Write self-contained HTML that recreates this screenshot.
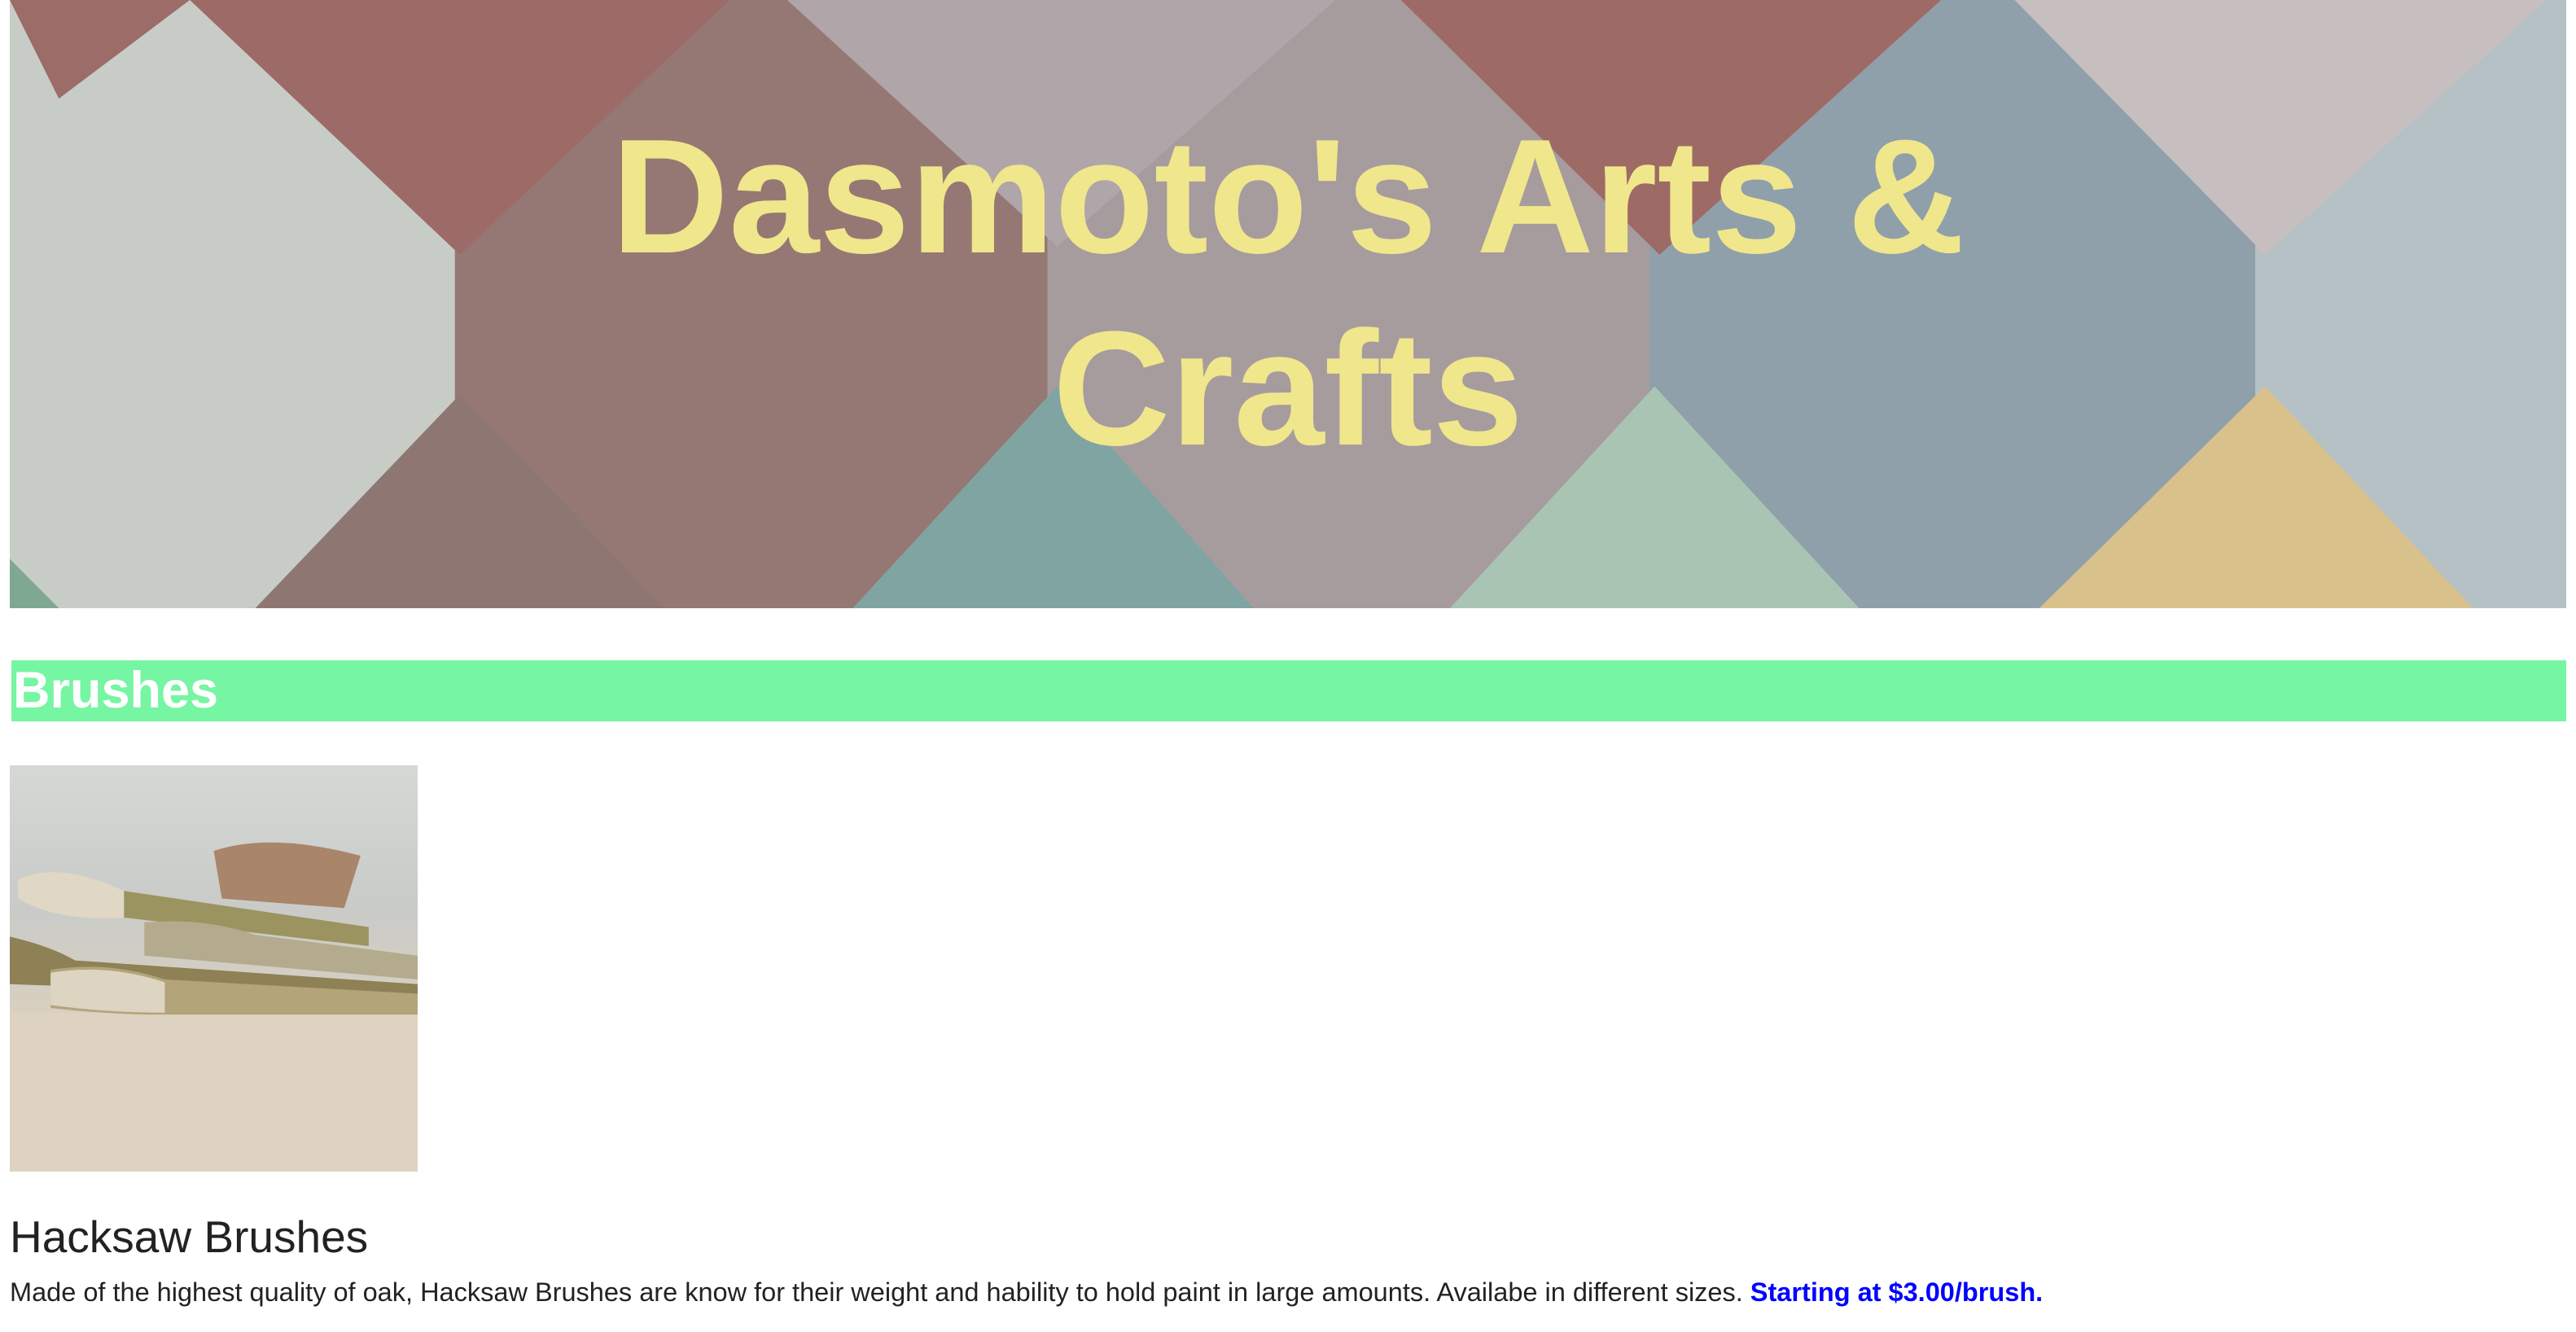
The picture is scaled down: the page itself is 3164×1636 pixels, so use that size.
<!DOCTYPE html>
<html><head><meta charset="utf-8"><style>
html,body{margin:0;padding:0;background:#fff;width:3164px;height:1636px;overflow:hidden;position:relative;font-family:"Liberation Sans",sans-serif}
#ban{position:absolute;left:12px;top:0;width:3140px;height:747px}
h1{position:absolute;left:0;top:124px;width:3164px;margin:0;text-align:center;font-size:200px;line-height:236px;color:#f0e68c;font-weight:bold}
#bar{position:absolute;left:14px;top:811px;width:3138px;height:75px;background:#76f5a2;color:#fff;font-weight:bold;font-size:63px;line-height:75px;padding-left:2px;box-sizing:border-box}
#img{position:absolute;left:12px;top:940px;width:501px;height:499px}
h2{position:absolute;left:12px;top:1487px;margin:0;font-size:55px;line-height:64px;font-weight:normal;color:#222}
p{position:absolute;left:12px;top:1568px;margin:0;font-size:32.5px;line-height:38px;color:#222;white-space:nowrap}
p b{color:#0000ff}
</style></head><body>
<svg id="ban" viewBox="0 0 1562 370" preserveAspectRatio="none">
<rect x="0" y="0" width="1562" height="370" fill="#a99d9e"/>
<rect x="0" y="0" width="272" height="370" fill="#c8ccc7"/>
<rect x="272" y="0" width="362" height="370" fill="#957873"/>
<rect x="634" y="0" width="368" height="370" fill="#a69c9e"/>
<rect x="1002" y="0" width="370" height="370" fill="#8fa0aa"/>
<rect x="1372" y="0" width="190" height="370" fill="#b5c1c5"/>
<polygon points="0,0 110,0 30,60" fill="#9c6c68"/>
<polygon points="110,0 440,0 275,155" fill="#9d6b67"/>
<polygon points="475,0 810,0 640,150" fill="#b0a6a9"/>
<polygon points="850,0 1180,0 1008,155" fill="#9e6a66"/>
<polygon points="1225,0 1550,0 1378,155" fill="#c7bfbf"/>
<polygon points="150,370 400,370 275,240" fill="#8e7772"/>
<polygon points="515,370 760,370 640,235" fill="#80a4a1"/>
<polygon points="880,370 1130,370 1005,235" fill="#a9c4b3"/>
<polygon points="1240,370 1505,370 1378,235" fill="#d9c18c"/>
<polygon points="0,340 30,370 0,370" fill="#7fa891"/>
</svg>
<h1>Dasmoto's Arts &amp;<br>Crafts</h1>
<div id="bar">Brushes</div>
<svg id="img" viewBox="0 0 500 427" preserveAspectRatio="none">
<defs><linearGradient id="g" x1="0" y1="0" x2="0" y2="1">
<stop offset="0" stop-color="#d5d8d4"/><stop offset="0.35" stop-color="#c9cbc8"/><stop offset="0.6" stop-color="#d8cfc0"/><stop offset="1" stop-color="#d8ccb8"/></linearGradient></defs>
<rect width="500" height="427" fill="url(#g)"/>
<rect x="0" y="260" width="500" height="167" fill="#ddd3c0"/>
<path d="M250 90 Q320 70 430 95 L410 150 L260 140 Z" fill="#a9856a"/>
<path d="M10 120 Q60 100 140 132 L140 160 Q60 165 10 140 Z" fill="#e0d7c5"/>
<path d="M140 132 L440 170 L440 190 L140 160 Z" fill="#9c9460"/>
<path d="M165 165 Q240 160 300 178 L500 200 L500 225 L165 200 Z" fill="#b4ab8e"/>
<path d="M0 180 Q50 190 80 205 L500 230 L500 245 L0 230 Z" fill="#8d8155"/>
<path d="M50 215 Q120 205 190 225 L500 240 L500 262 L190 262 Q120 262 50 255 Z" fill="#b3a47a"/>
<path d="M50 218 Q120 208 190 228 L190 260 Q120 260 50 252 Z" fill="#ddd4c2"/>
</svg>
<h2>Hacksaw Brushes</h2>
<p>Made of the highest quality of oak, Hacksaw Brushes are know for their weight and hability to hold paint in large amounts. Availabe in different sizes. <b>Starting at $3.00/brush.</b></p>
</body></html>
